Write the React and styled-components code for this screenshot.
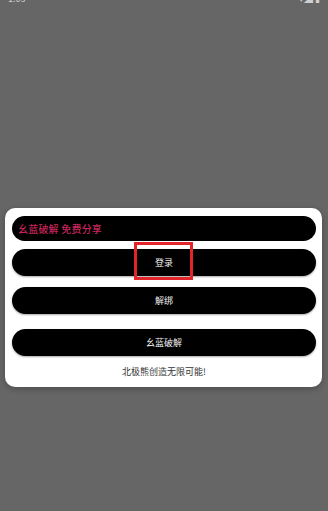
import React from 'react';
import styled, { createGlobalStyle } from 'styled-components';

const Global = createGlobalStyle`
  html, body {
    margin: 0;
    padding: 0;
    background: #666666;
    font-family: "Noto Sans CJK SC", "Noto Sans", sans-serif;
  }
`;

const App = () =>
  <>
    <Global />
    <Screen>
      <StatusBar>
        <span>1:03</span>
        <span>▾◢ ▮</span>
      </StatusBar>
      <Card>
        <Banner>幺蓝破解 免费分享</Banner>
        <Pill $gap={8}>
          登录
          <Highlight />
        </Pill>
        <Pill $gap={11}>解绑</Pill>
        <Pill $gap={15}>幺蓝破解</Pill>
        <Footer>北极熊创造无限可能!</Footer>
      </Card>
    </Screen>
  </>

export default App;

const Screen = styled.div`
  width: 328px;
  height: 511px;
  background: #666666;
  display: flex;
  flex-direction: column;
  overflow: hidden;
`

const StatusBar = styled.div`
  height: 3px;
  display: flex;
  justify-content: space-between;
  align-items: flex-end;
  padding: 0 8px;
  overflow: hidden;
  color: #d0d0d0;
  font-size: 9px;
  line-height: 9px;
`

const Card = styled.div`
  margin: 205px 6px 0 5px;
  background: #ffffff;
  border-radius: 10px;
  padding: 8px 6px 9px 7px;
  display: flex;
  flex-direction: column;
  box-shadow: 0 2px 6px rgba(0, 0, 0, 0.25);
`

const Banner = styled.div`
  height: 25px;
  border-radius: 13px;
  background: #000000;
  color: #c4245a;
  font-size: 10px;
  font-weight: 500;
  display: flex;
  align-items: center;
  padding-left: 6px;
  letter-spacing: 0.2px;
`

const Pill = styled.div`
  position: relative;
  margin-top: ${p => p.$gap}px;
  height: 27px;
  border-radius: 14px;
  background: #000000;
  color: #f2f2f2;
  font-size: 9px;
  display: flex;
  align-items: center;
  justify-content: center;
  box-shadow: 0 1px 2px rgba(0, 0, 0, 0.35);
`

const Highlight = styled.div`
  position: absolute;
  left: 122px;
  top: -7px;
  width: 53px;
  height: 32px;
  border: 3px solid #e3242b;
`

const Footer = styled.div`
  margin-top: 10px;
  text-align: center;
  color: #333333;
  font-size: 9px;
  line-height: 12px;
`
